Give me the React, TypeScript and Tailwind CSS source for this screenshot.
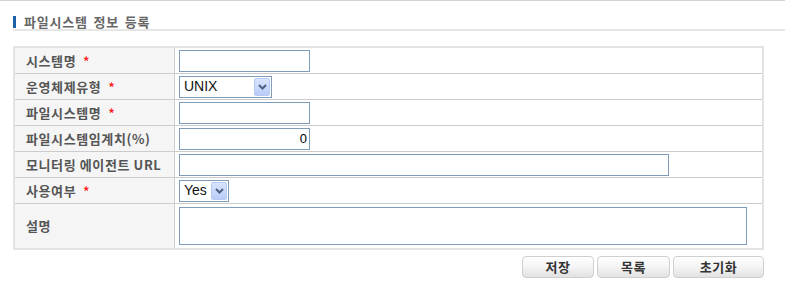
import type { ReactNode } from "react";

const font = { fontFamily: '"Noto Sans CJK KR", "Noto Sans", sans-serif' };

function Label({ text, required }: { text: string; required?: boolean }) {
  return (
    <div className="flex w-[160px] shrink-0 items-center self-stretch border-r border-[#cccccc] bg-[#f5f5f5] pl-[11px] text-[13px] font-bold tracking-[0.6px] text-[#555555]">
      <span>{text}</span>
      {required && <span className="ml-[7px] text-[12px] font-bold text-[#ff2020]">*</span>}
    </div>
  );
}

function Row({ label, required, children, tall }: { label: string; required?: boolean; children: ReactNode; tall?: boolean }) {
  return (
    <div className={`flex border-b border-[#cccccc] last:border-b-0 ${tall ? "h-[44px]" : "h-[26px]"}`}>
      <Label text={label} required={required} />
      <div className="flex flex-1 items-center pl-[4px]">{children}</div>
    </div>
  );
}

function TextInput({ width, value, right }: { width: string; value?: string; right?: boolean }) {
  return (
    <input
      className={`h-[22px] border border-[#7f9db9] bg-white px-[2px] text-[13px] text-black outline-none ${width} ${right ? "text-right" : ""}`}
      style={{ fontFamily: '"Liberation Sans", Arial, sans-serif' }}
      defaultValue={value}
    />
  );
}

function FakeSelect({ value, width }: { value: string; width: string }) {
  return (
    <div className={`flex h-[22px] items-center justify-between border border-[#7f9db9] bg-white p-[1px] ${width}`}>
      <span className="pl-[3px] text-[14px] text-[#111111]" style={{ fontFamily: '"Liberation Sans", Arial, sans-serif' }}>
        {value}
      </span>
      <span className="flex h-[18px] w-[16px] items-center justify-center rounded-[2px] border border-[#b6c8f4] bg-gradient-to-b from-[#d9e4fd] to-[#b9cdf8]">
        <svg width="9" height="6" viewBox="0 0 9 6">
          <path d="M1 1 L4.5 4.5 L8 1" fill="none" stroke="#4d6185" strokeWidth="2" />
        </svg>
      </span>
    </div>
  );
}

function Btn({ text, width }: { text: string; width: string }) {
  return (
    <button
      type="button"
      className={`h-[22px] rounded-[4px] border border-[#cfcfcf] bg-gradient-to-b from-white via-[#f4f4f4] to-[#e2e2e2] text-[13px] font-bold tracking-[0.6px] text-[#333333] ${width}`}
    >
      {text}
    </button>
  );
}

export default function App() {
  return (
    <div className="h-[303px] w-[785px] border-t border-[#d4d4d4] bg-white" style={font}>
      <div className="ml-[13px] mt-[15px] flex h-[12px] items-center">
        <span className="h-[12px] w-[3px] bg-[#1b5fa6]" />
        <span className="ml-[8px] text-[13px] leading-[12px] font-bold tracking-[0.8px] text-[#666666] [word-spacing:2px]">
          파일시스템 정보 등록
        </span>
      </div>
      <div className="ml-[13px] mt-[1px] h-[2px] bg-[#e6e6e6]" />

      <div className="ml-[13px] mt-[15px] w-[751px] border-2 border-[#e3e3e3]">
        <Row label="시스템명" required>
          <TextInput width="w-[131px]" />
        </Row>
        <Row label="운영체제유형" required>
          <FakeSelect value="UNIX" width="w-[93px]" />
        </Row>
        <Row label="파일시스템명" required>
          <TextInput width="w-[131px]" />
        </Row>
        <Row label="파일시스템임계치(%)">
          <TextInput width="w-[131px]" value="0" right />
        </Row>
        <Row label="모니터링 에이전트 URL">
          <TextInput width="w-[490px]" />
        </Row>
        <Row label="사용여부" required>
          <FakeSelect value="Yes" width="w-[50px]" />
        </Row>
        <Row label="설명" tall>
          <textarea className="h-[38px] w-[568px] resize-none border border-[#7f9db9] bg-white outline-none" />
        </Row>
      </div>

      <div className="mt-[6px] flex w-[764px] justify-end gap-[3px]">
        <Btn text="저장" width="w-[72px]" />
        <Btn text="목록" width="w-[73px]" />
        <Btn text="초기화" width="w-[91px]" />
      </div>
    </div>
  );
}
